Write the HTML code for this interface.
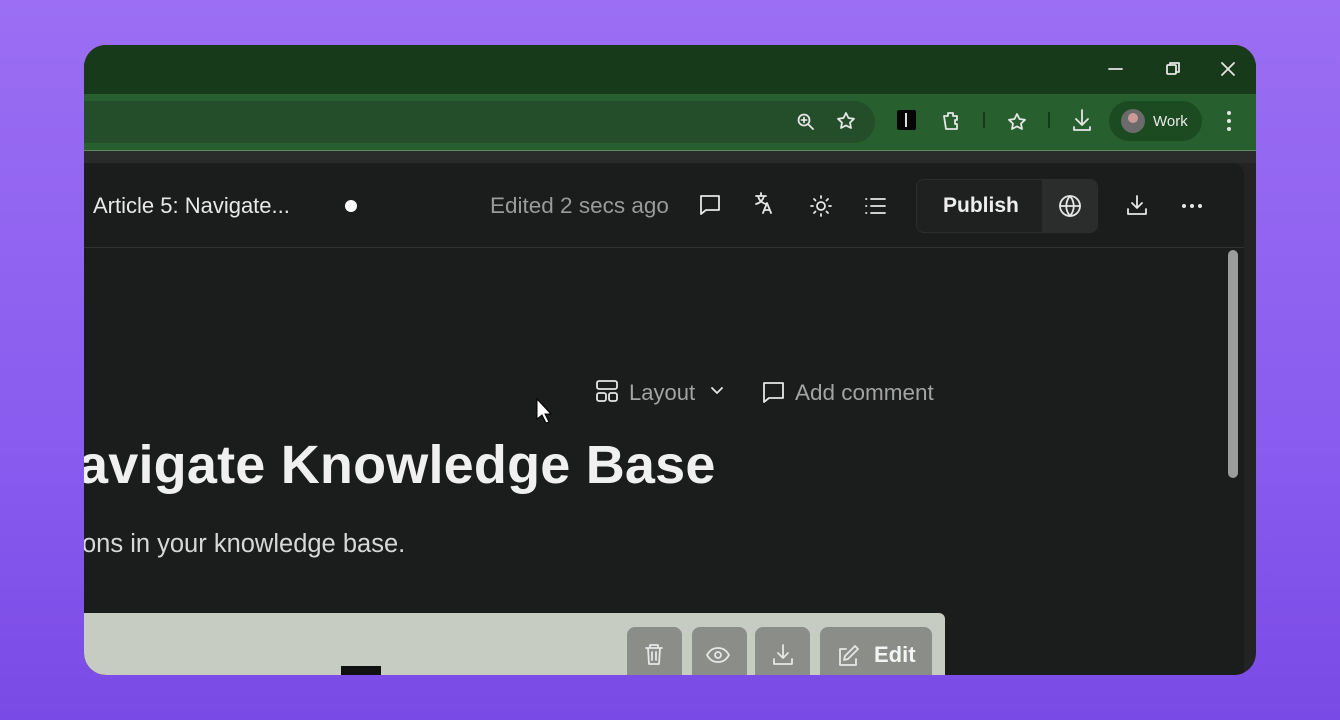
<!DOCTYPE html>
<html><head><meta charset="utf-8"><style>
*{margin:0;padding:0;box-sizing:border-box}
body{width:1340px;height:720px;overflow:hidden;background:linear-gradient(180deg,#9b6ef3 0%,#8a5cef 60%,#7a4ae6 100%);font-family:"Liberation Sans",sans-serif;position:relative}
.win{position:absolute;left:84px;top:45px;width:1172px;height:630px;border-radius:22px;overflow:hidden;background:#232323}
.title{position:absolute;left:0;top:0;width:100%;height:49px;background:#173b1a}
.tool{position:absolute;left:0;top:49px;width:100%;height:57px;background:#27602e;border-bottom:1px solid #5a8a5e}
.omni{position:absolute;left:0;top:7px;width:791px;height:42px;background:#234e29;border-radius:0 21px 21px 0}
.strip{position:absolute;left:0;top:106px;width:100%;height:12px;background:#2a2b2b}
.panel{position:absolute;left:0;top:118px;width:1160px;height:520px;background:#1b1c1c;border-radius:0 12px 0 0}
.hdr{position:absolute;left:0;top:0;width:100%;height:85px;border-bottom:1px solid #303131}
.t{position:absolute;color:#e8e8e8;white-space:nowrap}
svg{position:absolute}
.ic{stroke:#e6e6e6;fill:none;stroke-width:1.8;stroke-linecap:round;stroke-linejoin:round}
.btn{position:absolute;top:582px;height:60px;background:#8a8d88;border-radius:8px}
</style></head><body>
<div class="win">
 <div class="title"></div>
 <svg width="1172" height="60" style="left:0;top:0"><g class="ic" stroke-width="1.5"><path d="M1025 24h13"/><rect x="1083" y="20" width="9" height="9" rx="1"/><path d="M1086 20v-2h9v9h-3"/><path d="M1138 18l12 12M1150 18l-12 12"/></g></svg>
 <div class="tool"><div class="omni"></div></div>
 <svg width="1172" height="60" style="left:0;top:49px"><g class="ic" stroke-width="1.7">
  <circle cx="720" cy="26" r="5.5"/><path d="M724 30l5 5M720 23.5v5M717.5 26h5"/>
  <path d="M762 19l2.5 5 5.5 .8-4 3.8 1 5.4-5-2.6-5 2.6 1-5.4-4-3.8 5.5-.8z"/>
  <path d="M860 22h4v-3h5v3h4v4h-2v4h2v5h-11z"/>
  <path d="M933 20l2.5 5 5.5 .8-4 3.8 1 5.4-5-2.6-5 2.6 1-5.4-4-3.8 5.5-.8z"/>
  <path d="M998 16v14M992 25l6 6 6-6M990 33v3h16v-3"/>
 </g>
 <rect x="813" y="16" width="19" height="20" rx="2" fill="#050505"/><rect x="821" y="19" width="2" height="14" fill="#ddd"/>
 <path d="M900 18v16M965 18v16" stroke="#173b1a" stroke-width="2"/>
 <rect x="1025" y="7" width="93" height="40" rx="20" fill="#1c4a21"/>
 <circle cx="1049" cy="27" r="12" fill="#6b6b6b"/><circle cx="1049" cy="24" r="5" fill="#c99"/>
 <g fill="#e6e6e6"><circle cx="1145" cy="19" r="2"/><circle cx="1145" cy="27" r="2"/><circle cx="1145" cy="35" r="2"/></g>
 </svg>
 <div class="t" style="left:1069px;top:68px;font-size:15px;color:#eaeaea">Work</div>
 <div class="strip"></div>
 <div class="panel">
  <div class="hdr"></div>
  <div class="t" style="left:9px;top:30px;font-size:22px">Article 5: Navigate...</div>
  <div style="position:absolute;left:261px;top:37px;width:12px;height:12px;border-radius:50%;background:#fff"></div>
  <div class="t" style="left:406px;top:30px;font-size:22.5px;color:#9a9a9a">Edited 2 secs ago</div>
  <div style="position:absolute;left:832px;top:16px;width:182px;height:54px;border:1px solid #2c2d2d;border-radius:8px;background:#1f2020"></div>
  <div style="position:absolute;left:958px;top:17px;width:55px;height:52px;background:#2b2c2c;border-radius:0 7px 7px 0"></div>
  <div class="t" style="left:859px;top:31px;font-size:21px;font-weight:bold;color:#eee">Publish</div>
  <svg width="1160" height="85" style="left:0;top:0"><g class="ic">
   <path d="M617 33h18v14h-13l-5 4z"/>
   <path d="M672 33h10M677 30v3M674 33c1 4 4 7 8 8M680 33c-1 4-4 7-8 8M679 50l4-10 4 10M680.5 47h5"/>
   <circle cx="737" cy="43" r="4"/><path d="M737 33v2M737 51v2M727 43h2M745 43h2M730 36l1.5 1.5M742.5 48.5l1.5 1.5M730 50l1.5-1.5M742.5 37.5l1.5-1.5"/>
   <path d="M787 36h14M787 43h14M787 50h14M782 36h.5M782 43h.5M782 50h.5"/>
   <circle cx="986" cy="43" r="10"/><path d="M976 43h20M986 33c-5 6-5 14 0 20M986 33c5 6 5 14 0 20"/>
   <path d="M1053 33v12M1048 40l5 5 5-5M1044 46v5h18v-5"/>
  </g><g fill="#e6e6e6"><circle cx="1100" cy="43" r="2"/><circle cx="1108" cy="43" r="2"/><circle cx="1116" cy="43" r="2"/></g></svg>
  <div style="position:absolute;left:1144px;top:87px;width:10px;height:228px;border-radius:5px;background:#9c9c9c"></div>
  <svg width="400" height="40" style="left:500px;top:212px"><g class="ic" stroke="#a0a0a0">
   <rect x="13" y="6" width="20" height="8" rx="2"/><rect x="13" y="18" width="9" height="8" rx="2"/><rect x="25" y="18" width="8" height="8" rx="2"/>
   <path d="M128 13l5 5 5-5"/>
   <path d="M180 8h19v15h-14l-5 4z"/></g></svg>
  <div class="t" style="left:545px;top:217px;font-size:22px;color:#a3a3a3">Layout</div>
  <div class="t" style="left:711px;top:217px;font-size:22.5px;color:#a3a3a3">Add comment</div>
  <svg width="20" height="26" style="left:452px;top:235px"><path d="M1 1v20l5-4 4 8 3-1-4-8h6z" fill="#fff" stroke="#000" stroke-width="1"/></svg>
  <div class="t" style="left:-6px;top:270px;font-size:54px;font-weight:bold;color:#f0f0f0;letter-spacing:0.2px;line-height:64px">avigate Knowledge Base</div>
  <div class="t" style="left:-2px;top:367px;font-size:25.5px;color:#d8d8d8">ons in your knowledge base.</div>
 </div>
 <div style="position:absolute;left:0;top:568px;width:861px;height:70px;background:#c7ccc3;border-radius:0 6px 0 0"></div>
 <div style="position:absolute;left:257px;top:621px;width:40px;height:20px;background:#111"></div>
 <div class="btn" style="left:543px;width:55px"></div>
 <div class="btn" style="left:608px;width:55px"></div>
 <div class="btn" style="left:671px;width:55px"></div>
 <div class="btn" style="left:736px;width:112px"></div>
 <svg width="861" height="62" style="left:0;top:582px"><g class="ic" stroke="#f2f2f2">
  <path d="M562 21h16M566 21v-3h8v3M564 21l1 16h10l1-16M568 25v8M572 25v8"/>
  <path d="M623 28c3-5 6-7 11-7s8 2 11 7c-3 5-6 7-11 7s-8-2-11-7z"/><circle cx="634" cy="28" r="3"/>
  <path d="M699 18v13M694 26l5 5 5-5M690 32v5h18v-5"/>
  <path d="M762 22h-6v16h16v-6M760 33l1-4 10-10 3 3-10 10z"/>
 </g></svg>
 <div class="t" style="left:790px;top:597px;font-size:22px;font-weight:bold;color:#f4f4f4">Edit</div>
</div>
</body></html>
